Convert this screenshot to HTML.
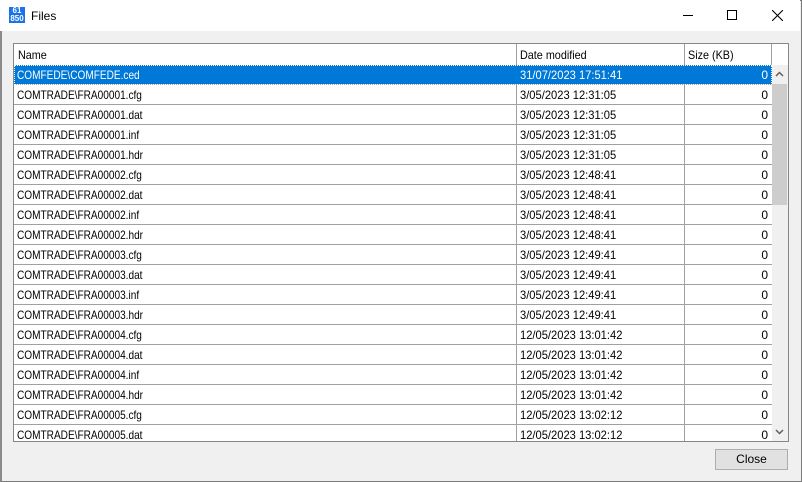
<!DOCTYPE html>
<html><head><style>
*{margin:0;padding:0;box-sizing:border-box}
body{width:802px;height:482px;overflow:hidden;background:#f0f0f0;font-family:"Liberation Sans",Tahoma,sans-serif;font-size:12px;position:relative}
.win{position:absolute;left:0;top:0;width:802px;height:482px;border:1px solid #7a7a7a;border-left:2px solid #8a8a8a}
.title{position:absolute;left:0;top:0;width:800px;height:31px;background:#fff}
.icon{position:absolute;left:9px;top:7px;width:16px;height:16px;background:#1a73e8;color:#fff;font-size:8px;line-height:8px;text-align:center;font-weight:bold}
.tt{position:absolute;left:31px;top:9px;font-size:12px}
.list{position:absolute;left:13px;top:43px;width:776px;height:399px;border:1px solid #828790;background:#fff;overflow:hidden}
.hdr{position:absolute;left:0;top:0;height:21px;width:758px}
.hdr div{position:absolute;top:4px;transform:scaleX(0.9);transform-origin:left}
.vl{position:absolute;top:0;width:1px;background:#a0a0a0}
.row{position:absolute;left:0;width:758px;height:20px;border-bottom:1px solid #a0a0a0}
.row span{position:absolute;top:3px;transform-origin:left;white-space:nowrap}
.row .n{transform:scaleX(0.84)}
.row .d{transform:scaleX(0.93)}
.sel{background:#0078d7;color:#fff;outline:1px dotted #fff;outline-offset:-1px}
.sb{position:absolute;left:758px;top:21px;width:16px;height:377px;background:#f0f0f0}
.thumb{position:absolute;left:0;top:19px;width:15px;height:121px;background:#cdcdcd}
.btn{position:absolute;left:715px;top:449px;width:73px;height:21px;background:#e1e1e1;border:1px solid #adadad;text-align:center;line-height:19px}
</style></head><body>
<div class="win"></div>
<div class="title"><div class="icon">61<br>850</div><div class="tt">Files</div>
<div style="position:absolute;left:683px;top:15px;width:10px;height:1px;background:#000"></div>
<div style="position:absolute;left:727px;top:10px;width:10px;height:10px;border:1px solid #000"></div>
<svg style="position:absolute;left:772px;top:10px" width="11" height="11"><path d="M0 0L11 11M11 0L0 11" stroke="#000" stroke-width="1.1"/></svg>
</div>
<div class="list">
<div class="hdr"><div style="left:4px">Name</div><div style="left:506px">Date modified</div><div style="left:674px">Size (KB)</div></div>
<div class="vl" style="left:502px;height:398px"></div>
<div class="vl" style="left:670px;height:398px"></div>
<div class="vl" style="left:757px;height:21px"></div>
<div id="rows"></div>
<div class="sb"><div class="thumb"></div>
<svg style="position:absolute;left:3px;top:6px" width="9" height="6"><path d="M1 5L4.5 1.5L8 5" stroke="#606060" stroke-width="1.5" fill="none"/></svg>
<svg style="position:absolute;left:3px;top:364px" width="9" height="6"><path d="M1 1L4.5 4.5L8 1" stroke="#606060" stroke-width="1.5" fill="none"/></svg>
</div>
</div>
<div class="btn">Close</div>
<script>
var d=[["COMFEDE\\COMFEDE.ced","31/07/2023 17:51:41"]];
var t=[["00001","3/05/2023 12:31:05"],["00002","3/05/2023 12:48:41"],["00003","3/05/2023 12:49:41"],["00004","12/05/2023 13:01:42"]];
var ex=["cfg","dat","inf","hdr"];
t.forEach(function(a){ex.forEach(function(e){d.push(["COMTRADE\\FRA"+a[0]+"."+e,a[1]])})});
d.push(["COMTRADE\\FRA00005.cfg","12/05/2023 13:02:12"]);d.push(["COMTRADE\\FRA00005.dat","12/05/2023 13:02:12"]);
var h="";d.forEach(function(r,i){h+='<div class="row'+(i==0?' sel':'')+'" style="top:'+(21+i*20)+'px"><span class="n" style="left:3px">'+r[0]+'</span><span class="d" style="left:506px">'+r[1]+'</span><span style="right:4px">0</span></div>'});
document.getElementById("rows").innerHTML=h;
</script>
</body></html>
